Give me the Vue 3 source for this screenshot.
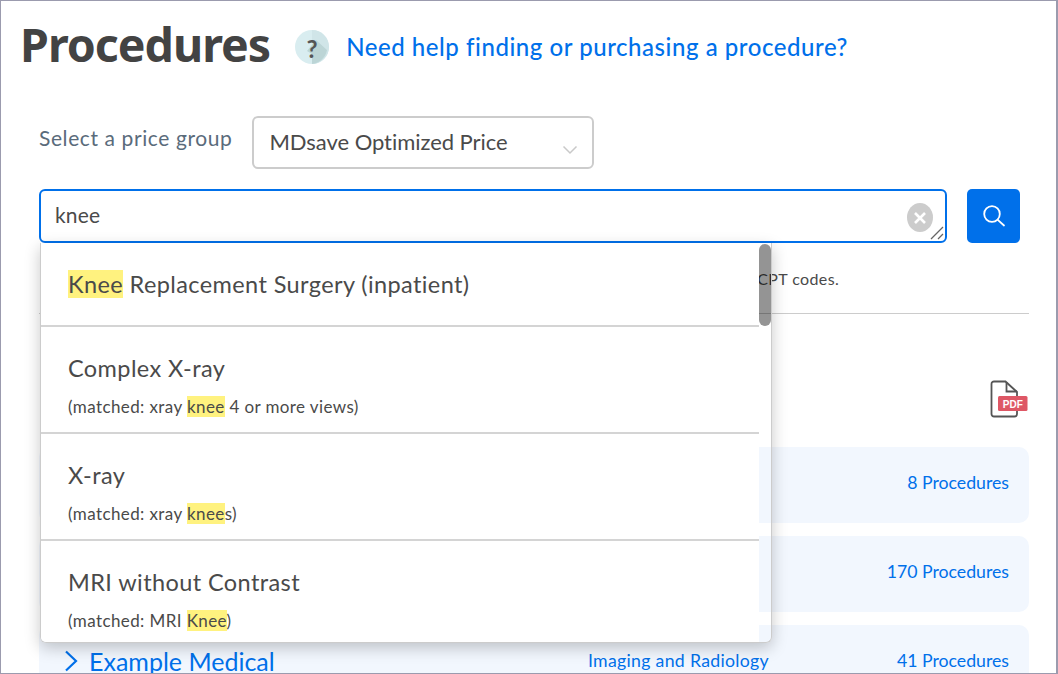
<template>
  <div class="page">
    <header class="title-row">
      <h1>Procedures</h1>
      <span class="help-icon">
        <svg viewBox="0 0 34 34" width="34" height="34">
          <circle cx="17" cy="17" r="17" fill="#d9edf0" />
          <path d="M17 0a17 17 0 0 1 0 34z" fill="#d0e5e8" />
          <path d="M17 34V24l-5-3 9-11 11 10A17 17 0 0 1 17 34z" fill="#bcd5d6" />
        </svg>
        <span class="help-mark">?</span>
      </span>
      <a class="help-link" href="#">Need help finding or purchasing a procedure?</a>
    </header>

    <div class="price-row">
      <label class="price-label">Select a price group</label>
      <div class="price-select">
        <span>MDsave Optimized Price</span>
        <svg viewBox="0 0 16 10" width="16" height="10" class="caret">
          <path d="M1.500 1.500 8 8l6.500-6.500" fill="none" stroke="#c9c9c9" stroke-width="1.500" />
        </svg>
      </div>
    </div>

    <div class="search-row">
      <div class="search-box">
        <textarea class="search-input" v-model="query" rows="1"></textarea>
        <button class="clear-btn" aria-label="Clear">
          <svg viewBox="0 0 14 14" width="14" height="14">
            <path d="M2 2l10 10M12 2 2 12" stroke="#fff" stroke-width="2.600" />
          </svg>
        </button>
        <svg class="grip" viewBox="0 0 14 14" width="14" height="14">
          <path d="M1 13 13 1M8 13l5-5" stroke="#666" stroke-width="1.300" />
        </svg>

        <div class="dropdown">
          <ul class="results">
            <li v-for="item in results" :key="item.title" class="result" :class="{ first: !item.matched }">
              <div class="result-title">
                <mark v-if="item.mark">{{ item.mark }}</mark>{{ item.title }}
              </div>
              <div v-if="item.matched" class="result-sub">
                (matched: {{ item.matched }} <mark>{{ item.hit }}</mark>{{ item.after }})
              </div>
            </li>
          </ul>
          <div class="thumb"></div>
        </div>
      </div>
      <button class="search-btn" aria-label="Search">
        <svg viewBox="0 0 24 24" width="24" height="24">
          <circle cx="10" cy="10" r="7.800" fill="none" stroke="#fff" stroke-width="1.800" />
          <path d="M15.800 15.800l6.200 5.700" stroke="#fff" stroke-width="1.800" stroke-linecap="round" />
        </svg>
      </button>
    </div>

    <p class="hint">You can search by procedure name, body part, medical specialty, keyword or, if you have one, by CPT codes.</p>
    <hr class="rule" />

    <div class="pdf-row">
      <svg viewBox="0 0 38 38" width="38" height="38">
        <path d="M4 1.500h11.500L27 12v22a2.500 2.500 0 0 1-2.500 2.500H4A2.500 2.500 0 0 1 1.500 34V4A2.500 2.500 0 0 1 4 1.500z" fill="#fff" stroke="#555" stroke-width="1.800" />
        <path d="M16.500 2v9.500H27" fill="none" stroke="#555" stroke-width="1.800" />
        <rect x="8" y="16" width="29.500" height="15" rx="1.500" fill="#de5765" />
        <text x="22.800" y="27.500" class="pdf-text">PDF</text>
      </svg>
    </div>

    <section class="cards">
      <div v-for="card in cards" :key="card.count" class="card">
        <a class="card-name" href="#">
          <svg v-if="card.name" viewBox="0 0 14 22" width="14" height="22">
            <path d="M2 1.500 12 11 2 20.500" fill="none" stroke="#0070ea" stroke-width="2.200" />
          </svg>
          {{ card.name }}
        </a>
        <span class="card-cat">{{ card.category }}</span>
        <span class="card-count">{{ card.count }}</span>
      </div>
    </section>
  </div>
</template>

<script setup>
import { ref } from 'vue'

const query = ref('knee')

const results = [
  { mark: 'Knee', title: ' Replacement Surgery (inpatient)' },
  { title: 'Complex X-ray', matched: 'xray', hit: 'knee', after: ' 4 or more views' },
  { title: 'X-ray', matched: 'xray', hit: 'knee', after: 's' },
  { title: 'MRI without Contrast', matched: 'MRI', hit: 'Knee', after: '' }
]

const cards = [
  { name: '', category: '', count: '8 Procedures' },
  { name: '', category: '', count: '170 Procedures' },
  { name: 'Example Medical', category: 'Imaging and Radiology', count: '41 Procedures' }
]
</script>

<style>
html, body {
  margin: 0;
  background: #fff;
}
</style>

<style scoped>
.page {
  box-sizing: border-box;
  width: 1058px;
  height: 674px;
  overflow: hidden;
  border: 1px solid #9b9bae;
  border-right-width: 2px;
  padding: 0 27px 0 38px;
  background: #fff;
  font-family: Lato, "Open Sans", sans-serif;
  color: #4a4a4a;
}

.title-row {
  display: flex;
  align-items: center;
  height: 86px;
  margin-left: -19px;
}

h1 {
  margin: 0;
  font-family: "Noto Sans", Lato, sans-serif;
  font-size: 46.5px;
  font-weight: 700;
  letter-spacing: -1px;
  color: #434343;
  line-height: 86px;
}

.help-icon {
  position: relative;
  display: block;
  width: 34px;
  height: 34px;
  margin: 5px 0 0 25px;
}

.help-mark {
  position: absolute;
  inset: 0;
  text-align: center;
  font-size: 24px;
  font-weight: 700;
  line-height: 37px;
  color: #555;
}

.help-link {
  margin: 5px 0 0 17px;
  font-size: 24px;
  font-weight: 500;
  letter-spacing: 0.55px;
  color: #0070ea;
  text-decoration: none;
}

.price-row {
  display: flex;
  align-items: center;
  margin-top: 29px;
  gap: 20px;
}

.price-label {
  position: relative;
  top: -5px;
  font-size: 21px;
  color: #5a6b7b;
  letter-spacing: 0.6px;
}

.price-select {
  box-sizing: border-box;
  display: flex;
  align-items: center;
  justify-content: space-between;
  width: 342px;
  height: 53px;
  padding: 0 14px 2px 15px;
  border: 2px solid #ccc;
  border-radius: 6px;
  font-size: 22px;
  letter-spacing: -0.05px;
}

.caret {
  margin-top: 16px;
}

.search-row {
  display: flex;
  gap: 20px;
  margin-top: 20px;
}

.search-box {
  position: relative;
  width: 908px;
  height: 54px;
}

.search-input {
  box-sizing: border-box;
  display: block;
  width: 908px;
  height: 54px;
  padding: 11px 14px;
  border: 2px solid #0070ea;
  border-radius: 6px;
  outline: none;
  font-family: Lato, sans-serif;
  font-size: 21px;
  letter-spacing: 0.2px;
  color: #4a4a4a;
  resize: none;
}

.clear-btn {
  position: absolute;
  top: 14px;
  right: 14px;
  display: flex;
  align-items: center;
  justify-content: center;
  width: 26px;
  height: 29px;
  padding: 0;
  border: none;
  border-radius: 50%;
  background: #ccc;
}

.grip {
  position: absolute;
  right: 3px;
  bottom: 3px;
}

.search-btn {
  display: flex;
  align-items: center;
  justify-content: center;
  width: 53px;
  height: 54px;
  padding: 0;
  border: none;
  border-radius: 5px;
  background: #0070ea;
}

.dropdown {
  position: absolute;
  z-index: 5;
  top: 54px;
  left: 1px;
  box-sizing: border-box;
  width: 732px;
  height: 400px;
  overflow: hidden;
  border: 1px solid #ccc;
  border-top: none;
  border-radius: 0 0 6px 6px;
  box-shadow: 0 5px 16px rgba(0, 0, 0, 0.22);
}

.results {
  width: 718px;
  height: 100%;
  margin: 0;
  padding: 0;
  list-style: none;
  background: #fff;
}

.result {
  box-sizing: content-box;
  height: 105px;
  padding-left: 27px;
  border-bottom: 2px solid #d4d4d4;
}

.result.first {
  height: 82px;
}

.result:last-child {
  border-bottom: none;
}

.result-title {
  padding-top: 25px;
  font-size: 23.5px;
  line-height: 32px;
  letter-spacing: 0.4px;
}

.result-sub {
  margin-top: 12px;
  font-size: 17px;
  line-height: 21px;
  letter-spacing: 0.4px;
}

mark {
  background: #fff27f;
  color: inherit;
}

.thumb {
  position: absolute;
  top: 1px;
  right: 0;
  width: 12px;
  height: 82px;
  border-radius: 6px;
  background: rgba(0, 0, 0, 0.42);
}

.hint {
  margin: 25px 0 0;
  padding-left: 6px;
  font-size: 16px;
  line-height: 22px;
  letter-spacing: 0.4px;
  white-space: nowrap;
}

.rule {
  margin: 23px 0 0;
  border: none;
  border-top: 1px solid #ccc;
}

.pdf-row {
  display: flex;
  justify-content: flex-end;
  margin-top: 66px;
  padding-right: 1px;
  height: 38px;
}

.pdf-text {
  font-family: "Liberation Sans", sans-serif;
  font-size: 10px;
  font-weight: 700;
  fill: #fff;
  text-anchor: middle;
}

.cards {
  display: flex;
  flex-direction: column;
  gap: 13px;
  margin-top: 29px;
}

.card {
  box-sizing: border-box;
  display: grid;
  grid-template-columns: 524px 1fr auto;
  align-items: center;
  flex: none;
  height: 76px;
  padding: 0 20px 5px 25px;
  border-radius: 10px;
  background: #f2f7fe;
  color: #0070ea;
  font-size: 17.7px;
}

.card-cat {
  letter-spacing: 0.3px;
}

.card-name {
  display: flex;
  align-items: center;
  gap: 11px;
  font-size: 25px;
  color: #0070ea;
  text-decoration: none;
}
</style>
